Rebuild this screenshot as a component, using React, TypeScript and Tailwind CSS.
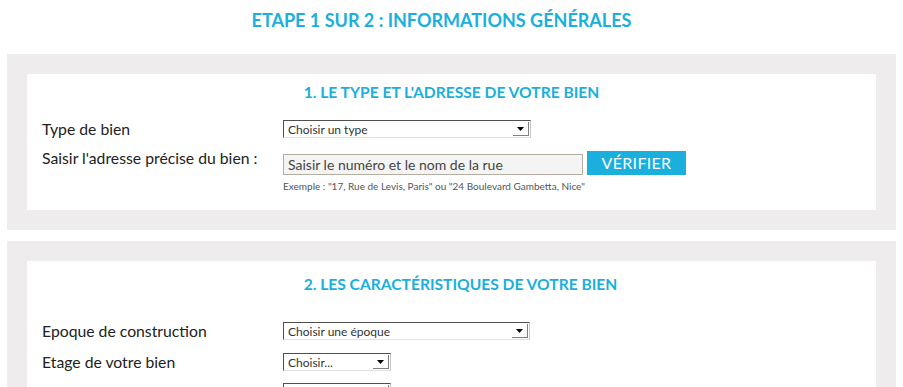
const font = { fontFamily: "Lato, 'Open Sans', sans-serif" };

function FakeSelect({ label, width }: { label: string; width: string }) {
  return (
    <div
      className={`${width} h-[18px] flex items-stretch bg-white border-t border-l border-t-[#505050] border-l-[#505050] border-r border-b border-r-[#c8c8c8] border-b-[#e2e2e2]`}
    >
      <span className="flex-1 pl-[4px] text-[12px] leading-[17px] text-[#333] truncate">
        {label}
      </span>
      <span className="w-[16px] my-[1px] mr-[1px] flex items-center justify-center bg-white border-r border-b border-r-[#808080] border-b-[#808080]">
        <svg width="7" height="4" viewBox="0 0 7 4">
          <path d="M0 0h7L3.5 4z" fill="#000" />
        </svg>
      </span>
    </div>
  );
}

function Row({ label, children, className }: { label: string; children: React.ReactNode; className?: string }) {
  return (
    <div className={`flex items-start ${className ?? ""}`}>
      <div className="w-[241px] shrink-0 text-[15.75px] leading-[18px] text-[#222] whitespace-nowrap">{label}</div>
      {children}
    </div>
  );
}

function Panel({ children, className }: { children: React.ReactNode; className?: string }) {
  return (
    <div className={`mx-[7px] p-[20px] bg-[#eeecec] ${className ?? ""}`}>
      <div className="bg-white px-[15px]">{children}</div>
    </div>
  );
}

export default function App() {
  return (
    <div className="w-[903px] h-[387px] overflow-hidden bg-white" style={font}>
      <div className="h-[54px] pt-[9px] pr-[20px]">
        <h1 className="text-center text-[18px] leading-[22px] font-bold text-[#1aafdc]">
          ETAPE 1 SUR 2 : INFORMATIONS GÉNÉRALES
        </h1>
      </div>

      <Panel>
        <div className="pt-[8px] pb-[18px]">
          <h2 className="text-center text-[15.6px] leading-[20px] font-bold text-[#1aafdc]">
            1. LE TYPE ET L'ADRESSE DE VOTRE BIEN
          </h2>
          <Row label="Type de bien" className="mt-[18px]">
            <FakeSelect label="Choisir un type" width="w-[248px]" />
          </Row>
          <Row label="Saisir l'adresse précise du bien :" className="mt-[11px]">
            <div>
              <div className="flex items-start">
                <div className="mt-[5px] w-[300px] h-[21px] border border-[#b3ae9f] bg-[#f4f4f4] pl-[4px] text-[14px] leading-[19px] text-[#444]">
                  Saisir le numéro et le nom de la rue
                </div>
                <button className="mt-[2px] ml-[4px] w-[99px] h-[24px] bg-[#1aafdc] text-white text-[16px] leading-[24px] tracking-[0.3px]">
                  VÉRIFIER
                </button>
              </div>
              <p className="mt-[5px] text-[10px] leading-[12px] text-[#555]">
                Exemple : "17, Rue de Levis, Paris" ou "24 Boulevard Gambetta, Nice"
              </p>
            </div>
          </Row>
        </div>
      </Panel>

      <Panel className="mt-[11px]">
        <div className="pt-[13px] pb-[20px]">
          <h2 className="pl-[18px] text-center text-[15.6px] leading-[20px] font-bold text-[#1aafdc]">
            2. LES CARACTÉRISTIQUES DE VOTRE BIEN
          </h2>
          <Row label="Epoque de construction" className="mt-[28px]">
            <FakeSelect label="Choisir une époque" width="w-[247px]" />
          </Row>
          <Row label="Etage de votre bien" className="mt-[13px]">
            <FakeSelect label="Choisir..." width="w-[108px]" />
          </Row>
          <Row label="Nombre total de pièces principales" className="mt-[12px]">
            <FakeSelect label="Choisir..." width="w-[108px]" />
          </Row>
        </div>
      </Panel>
    </div>
  );
}
